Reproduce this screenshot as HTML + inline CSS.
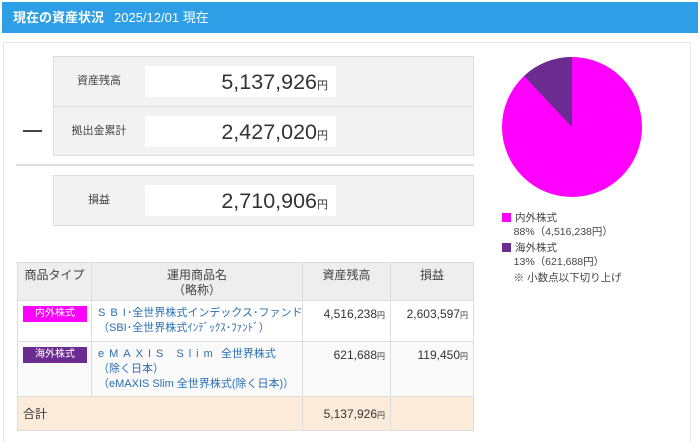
<!DOCTYPE html>
<html><head><meta charset="utf-8"><style>
*{margin:0;padding:0;box-sizing:border-box}
body{width:700px;height:438px;background:#fff;font-family:"Liberation Sans","Noto Sans CJK JP",sans-serif;color:#333;position:relative;overflow:hidden;font-size:11px}
.hdr{position:absolute;left:2px;top:2px;width:696px;height:31px;background:#2e9fe6;color:#fff;font-size:13px;line-height:31px;padding-left:11px}
.hdr b{font-weight:bold;margin-right:10px}
.panel{position:absolute;left:3px;top:42px;width:688px;height:400px;border:1px solid #e6e6e6;border-bottom:none}
.box{position:absolute;left:53px;width:421px;background:#f2f2f2;border:1px solid #ddd}
.row{position:relative;height:49px}
.row+.row{border-top:1px solid #ddd}
.lbl{position:absolute;left:0;width:90px;top:0;line-height:48px;text-align:center;font-size:11px;color:#444}
.val{position:absolute;left:91px;top:9px;width:191px;height:31px;background:#fff;text-align:right;padding-right:8px;font-size:21.5px;line-height:33px;color:#333}
.val small{font-size:11px}
table{position:absolute;left:17px;top:262px;width:457px;border-collapse:collapse;font-size:12px;table-layout:fixed}
td,th{border:1px solid #ddd;vertical-align:top;overflow:hidden}
th{background:#eee;font-weight:normal;color:#444;height:38px;padding-top:5px;line-height:15px}
td.n{text-align:right;padding:6px 5px 0 0}
td small,th small{font-size:8px}
.tag{display:inline-block;width:64px;height:16px;line-height:16px;text-align:center;color:#fff;font-size:10px;margin:5px 0 0 5px}
.nm{color:#2a6fb3;padding:5px 0 0 6px;line-height:15px;white-space:nowrap;font-size:11px}
.leg{position:absolute;left:502px;font-size:10.5px;color:#444;line-height:14px}
.sq{display:inline-block;width:9px;height:9px;margin-right:4px;vertical-align:-1px}
</style></head><body>
<div class="hdr"><b>現在の資産状況</b>2025/12/01 現在</div>
<div class="panel"></div>
<div class="box" style="top:56px"><div class="row"><div class="lbl">資産残高</div><div class="val">5,137,926<small>円</small></div></div><div class="row"><div class="lbl">拠出金累計</div><div class="val">2,427,020<small>円</small></div></div></div>
<div style="position:absolute;left:23px;top:130px;width:19px;height:2px;background:#444"></div>
<div style="position:absolute;left:16px;top:164px;width:458px;height:2px;background:#ddd"></div>
<div class="box" style="top:175px"><div class="row"><div class="lbl">損益</div><div class="val">2,710,906<small>円</small></div></div></div>
<table>
<colgroup><col style="width:74px"><col style="width:211px"><col style="width:88px"><col></colgroup>
<tr><th>商品タイプ</th><th>運用商品名<br>（略称）</th><th>資産残高</th><th>損益</th></tr>
<tr style="height:41px;background:#fff"><td><span class="tag" style="background:#ff00ff">内外株式</span></td><td class="nm"><span style="letter-spacing:1px">S B I</span>･全世界株式インデックス･ファンド<br>（SBI･全世界株式ｲﾝﾃﾞｯｸｽ･ﾌｧﾝﾄﾞ）</td><td class="n">4,516,238<small>円</small></td><td class="n">2,603,597<small>円</small></td></tr>
<tr style="height:55px;background:#fafafa"><td><span class="tag" style="background:#6a2c91">海外株式</span></td><td class="nm"><span style="letter-spacing:5px">eMAXIS Slim</span> 全世界株式<br>（除く日本）<br>（eMAXIS Slim 全世界株式(除く日本)）</td><td class="n">621,688<small>円</small></td><td class="n">119,450<small>円</small></td></tr>
<tr style="height:34px;background:#fcebd9"><td colspan="2" style="vertical-align:middle;padding-left:5px">合計</td><td class="n" style="vertical-align:middle;padding-top:0">5,137,926<small>円</small></td><td></td></tr>
</table>
<svg style="position:absolute;left:0;top:0" width="700" height="438"><circle cx="572" cy="127" r="70" fill="#ff00ff"/><path d="M572 127 L572 57 A70 70 0 0 0 524 76 Z" fill="#6a2c91"/></svg>
<div class="leg" style="top:211px"><span class="sq" style="background:#ff00ff"></span>内外株式<br>&nbsp;&nbsp;&nbsp;&nbsp;88%（4,516,238円）</div>
<div class="leg" style="top:241px"><span class="sq" style="background:#6a2c91"></span>海外株式<br>&nbsp;&nbsp;&nbsp;&nbsp;13%（621,688円）</div>
<div class="leg" style="top:271px">&nbsp;&nbsp;&nbsp;&nbsp;※ 小数点以下切り上げ</div>
</body></html>
